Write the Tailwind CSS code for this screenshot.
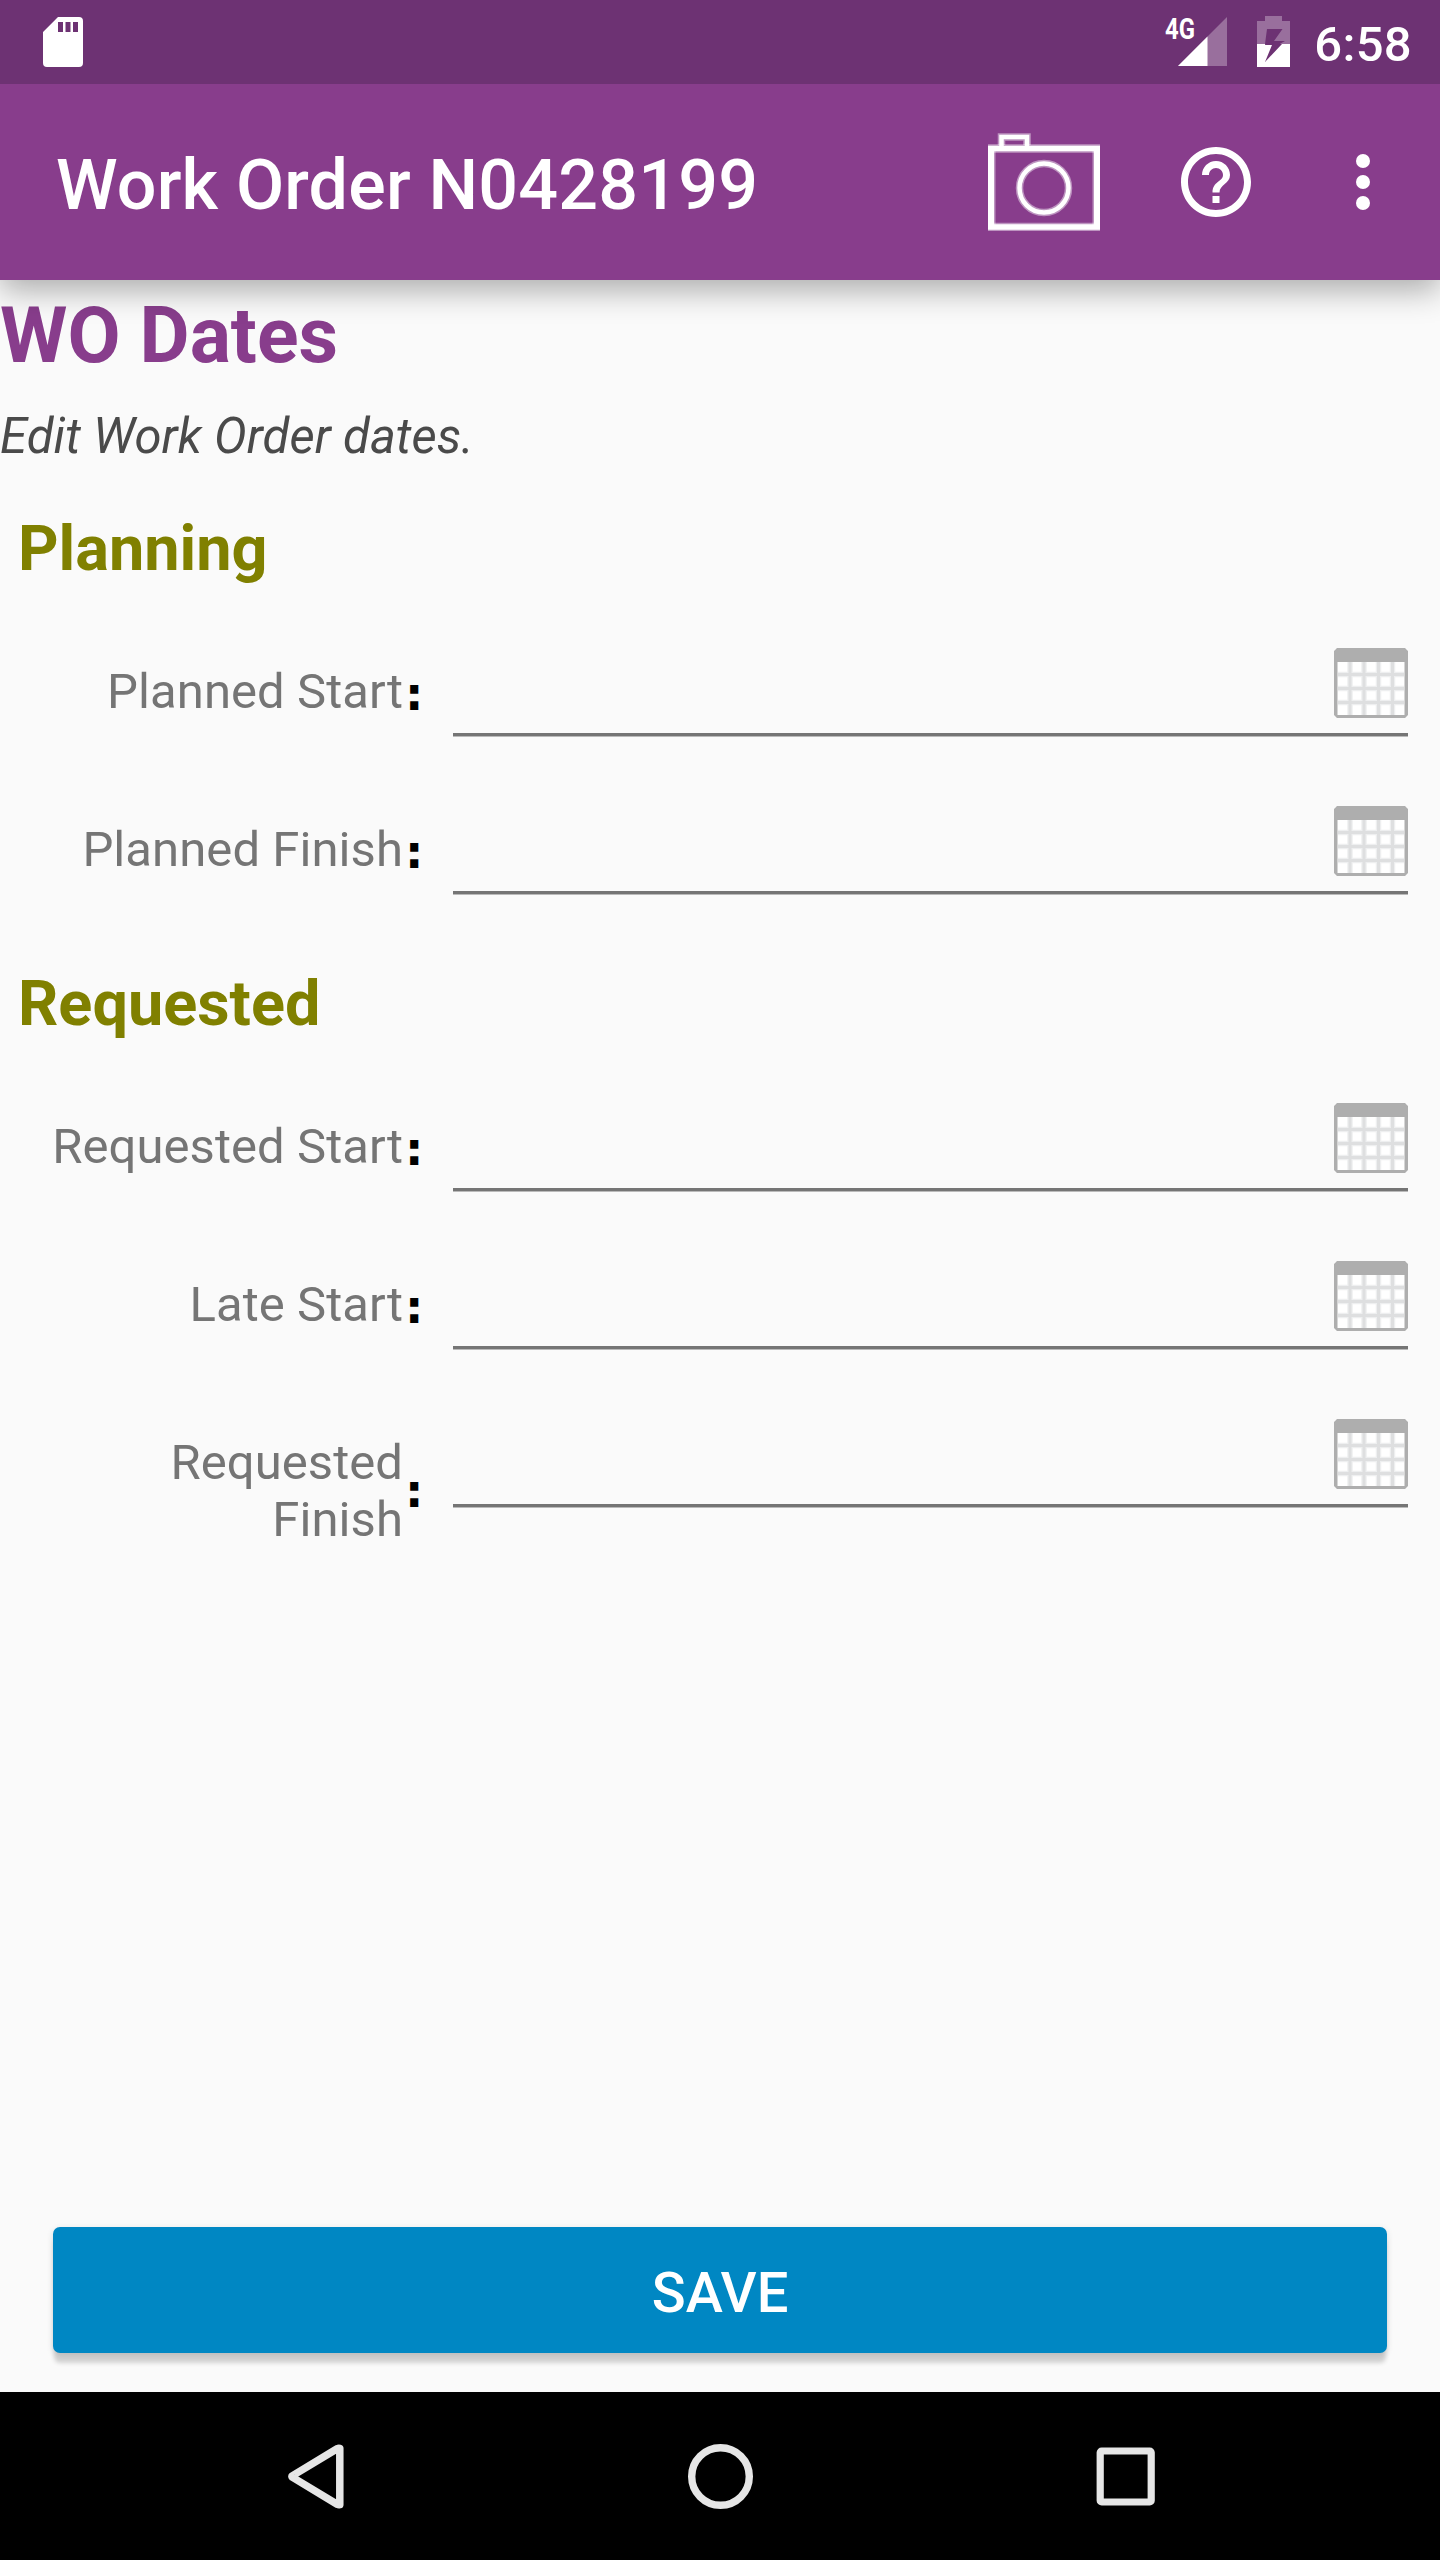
<!DOCTYPE html>
<html lang="en">
<head>
<meta charset="utf-8">
<title>Work Order N0428199</title>
<script src="https://cdn.jsdelivr.net/npm/@tailwindcss/browser@4"></script>
</head>
<body class="flex h-[2560px] w-[1440px] flex-col overflow-hidden bg-[#fafafa] font-['Roboto',sans-serif]">
<svg class="hidden">
  <symbol id="cal" viewBox="0 0 74 70">
    <rect x="1" y="1" width="72" height="68" fill="#fff"/>
    <path d="M16 14v53M30 14v53M44.500 14v53M58.500 14v53M4 26.500h66M4 40.500h66M4 54.500h66" stroke="#eeeff0" stroke-width="5.500"/>
    <path d="M16 14v53M30 14v53M44.500 14v53M58.500 14v53M4 26.500h66M4 40.500h66M4 54.500h66" stroke="#dedfe0" stroke-width="3"/>
    <path d="M3 0h68l3 3v64l-3 3H3l-3-3V3zM3.500 14v53h67V14z" fill="#aeaeae" fill-rule="evenodd"/>
  </symbol>
</svg>

<!-- Status bar -->
<div class="relative z-20 flex h-[84px] shrink-0 items-start bg-[#6d3273] text-white">
  <svg class="mt-[17px] ml-[43px] h-[50px] w-10" viewBox="0 0 40 50"><path fill="#fff" fill-rule="evenodd" d="M15 0H36Q40 0 40 4V46Q40 50 36 50H4Q0 50 0 46V15ZM15 5v10h5V5zM22.500 5v10h5V5zM30 5v10h5V5z"/></svg>
  <svg class="mt-[8px] ml-auto h-[59px] w-[62px] overflow-visible" viewBox="0 -8 62 59">
    <text x="0" y="23" font-family="Roboto" font-weight="700" font-size="29.500" fill="#fff" textLength="30" lengthAdjust="spacingAndGlyphs">4G</text>
    <path d="M62 1V50H13z" fill="#fff" fill-opacity=".3"/><path d="M42.500 20.500V50H13z" fill="#fff"/>
  </svg>
  <svg class="mt-[16px] ml-[30px] h-[51px] w-[33px]" viewBox="0 0 33 51">
    <path d="M8 0h17v5h8v23H22.700L28 25H17L25.500 13H10L8 28H0V5h8z" fill="#fff" fill-opacity=".3"/>
    <path d="M0 28H8.200L8 29h7L8 46 25 28H33V51H0z" fill="#fff"/>
  </svg>
  <div class="mt-[16px] mr-[28px] ml-[24px] text-[49px] leading-[57px] font-medium tracking-[0.3px]">6:58</div>
</div>

<!-- App bar -->
<header class="relative z-10 flex h-[196px] shrink-0 items-center bg-[#883d8c] text-white shadow-[0_10px_30px_rgba(0,0,0,0.32)]">
  <h1 class="mt-[6px] ml-14 text-[70px] leading-[84px] font-medium tracking-[0.19px]">Work Order N0428199</h1>
  <svg class="ml-auto h-[98px] w-28" viewBox="0 0 112 98" fill="none" stroke="#fff">
    <g stroke-opacity=".45"><path d="M0 15.500H112M0 94H112" stroke-width="8.500"/><path d="M3.500 14V96M108.500 14V96" stroke-width="8"/>
    <path d="M13.500 12V4H39V12" stroke-width="7.500"/><circle cx="56" cy="55" r="24.500" stroke-width="7.500"/></g>
    <path d="M0 15.500H112M0 94H112" stroke-width="5.500"/><path d="M3 14V96M109 14V96" stroke-width="6"/>
    <path d="M13.500 14V4H39V14" stroke-width="4.500"/><circle cx="56" cy="55" r="24.500" stroke-width="4.500"/>
  </svg>
  <svg class="ml-[74px] h-[84px] w-[84px]" viewBox="0 0 24 24" fill="#fff"><path d="M11 18h2v-2h-2v2zm1-16C6.480 2 2 6.480 2 12s4.480 10 10 10 10-4.480 10-10S17.520 2 12 2zm0 18c-4.410 0-8-3.590-8-8s3.590-8 8-8 8 3.590 8 8-3.590 8-8 8zm0-14c-2.210 0-4 1.790-4 4h2c0-1.100.9-2 2-2s2 .9 2 2c0 2-3 1.750-3 5h2c0-2.250 3-2.500 3-5 0-2.210-1.790-4-4-4z"/></svg>
  <svg class="mr-[35px] ml-[63px] h-[84px] w-[84px]" viewBox="0 0 24 24" fill="#fff"><circle cx="12" cy="6" r="2"/><circle cx="12" cy="12" r="2"/><circle cx="12" cy="18" r="2"/></svg>
</header>

<main class="flex flex-1 flex-col pt-[11px]">
  <h2 class="text-[77px] leading-[90px] font-bold text-[#883d8c]">WO Dates</h2>
  <p class="mt-[27px] text-[49px] leading-[58px] tracking-[0.08px] text-[#4a4a4a] italic">Edit Work Order dates.</p>

  <h3 class="mt-[45px] ml-[18px] text-[63px] leading-[75px] font-bold text-[#808000]">Planning</h3>
  <div class="mt-[54px]">
    <div class="flex h-[158px] items-start">
      <div class="mt-[23px] flex min-h-[62px] w-[421px]">
        <label class="flex-1 pr-[2px] text-right text-[49px] leading-[57px] tracking-[0.07px] text-[#757575]">Planned Start</label>
        <span class="w-4 self-center text-[46px] leading-[45px] font-bold font-['DejaVu_Sans']">:</span>
      </div>
      <div class="ml-8 flex h-[96px] w-[955px] justify-end border-b-[3px] border-[#757575] shadow-[0_1px_0_#bababa]"><svg class="mt-2 h-[70px] w-[74px]"><use href="#cal"/></svg></div>
    </div>
    <div class="flex h-[158px] items-start">
      <div class="mt-[23px] flex min-h-[62px] w-[421px]">
        <label class="flex-1 pr-[2px] text-right text-[49px] leading-[57px] tracking-[0.07px] text-[#757575]">Planned Finish</label>
        <span class="w-4 self-center text-[46px] leading-[45px] font-bold font-['DejaVu_Sans']">:</span>
      </div>
      <div class="ml-8 flex h-[96px] w-[955px] justify-end border-b-[3px] border-[#757575] shadow-[0_1px_0_#bababa]"><svg class="mt-2 h-[70px] w-[74px]"><use href="#cal"/></svg></div>
    </div>
  </div>

  <h3 class="mt-[10px] ml-[18px] text-[63px] leading-[75px] font-bold text-[#808000]">Requested</h3>
  <div class="mt-[54px]">
    <div class="flex h-[158px] items-start">
      <div class="mt-[23px] flex min-h-[62px] w-[421px]">
        <label class="flex-1 pr-[2px] text-right text-[49px] leading-[57px] tracking-[0.07px] text-[#757575]">Requested Start</label>
        <span class="w-4 self-center text-[46px] leading-[45px] font-bold font-['DejaVu_Sans']">:</span>
      </div>
      <div class="ml-8 flex h-[96px] w-[955px] justify-end border-b-[3px] border-[#757575] shadow-[0_1px_0_#bababa]"><svg class="mt-2 h-[70px] w-[74px]"><use href="#cal"/></svg></div>
    </div>
    <div class="flex h-[158px] items-start">
      <div class="mt-[23px] flex min-h-[62px] w-[421px]">
        <label class="flex-1 pr-[2px] text-right text-[49px] leading-[57px] tracking-[0.07px] text-[#757575]">Late Start</label>
        <span class="w-4 self-center text-[46px] leading-[45px] font-bold font-['DejaVu_Sans']">:</span>
      </div>
      <div class="ml-8 flex h-[96px] w-[955px] justify-end border-b-[3px] border-[#757575] shadow-[0_1px_0_#bababa]"><svg class="mt-2 h-[70px] w-[74px]"><use href="#cal"/></svg></div>
    </div>
    <div class="flex h-[158px] items-start">
      <div class="mt-[23px] flex min-h-[62px] w-[421px]">
        <label class="flex-1 pr-[2px] text-right text-[49px] leading-[57px] tracking-[0.07px] text-[#757575]">Requested<br>Finish</label>
        <span class="w-4 self-center text-[46px] leading-[45px] font-bold font-['DejaVu_Sans']">:</span>
      </div>
      <div class="ml-8 flex h-[96px] w-[955px] justify-end border-b-[3px] border-[#757575] shadow-[0_1px_0_#bababa]"><svg class="mt-2 h-[70px] w-[74px]"><use href="#cal"/></svg></div>
    </div>
  </div>

  <button class="mx-[53px] mt-auto mb-[39px] h-[126px] rounded-[7px] bg-[#0087c3] pt-[6px] text-[56px] leading-[66px] font-medium text-white shadow-[0_11px_4px_-1px_rgba(0,0,0,0.16),0_2px_7px_rgba(0,0,0,0.12)]">SAVE</button>
</main>

<!-- Navigation bar -->
<nav class="flex h-[168px] shrink-0 items-center bg-black">
  <svg class="ml-[287px] h-[66px] w-[58px]" viewBox="0 0 58 66" fill="none" stroke="#e6e6e6" stroke-width="7.500" stroke-linejoin="round"><path d="M52.800 5.300V61.700Q51.500 62 50.500 61.500L5.200 34.100Q4.500 33.500 5.200 32.900L50.500 5.500Q51.500 5 52.800 5.300z"/></svg>
  <svg class="ml-[342px] h-[66px] w-[66px]" viewBox="0 0 66 66"><circle cx="33.500" cy="33.500" r="28.800" fill="none" stroke="#e6e6e6" stroke-width="7.400"/></svg>
  <svg class="ml-[343px] h-[60px] w-[60px]" viewBox="0 0 60 60"><rect x="4.200" y="5" width="51" height="51" rx="1.500" fill="none" stroke="#e6e6e6" stroke-width="7.200"/></svg>
</nav>
</body>
</html>
